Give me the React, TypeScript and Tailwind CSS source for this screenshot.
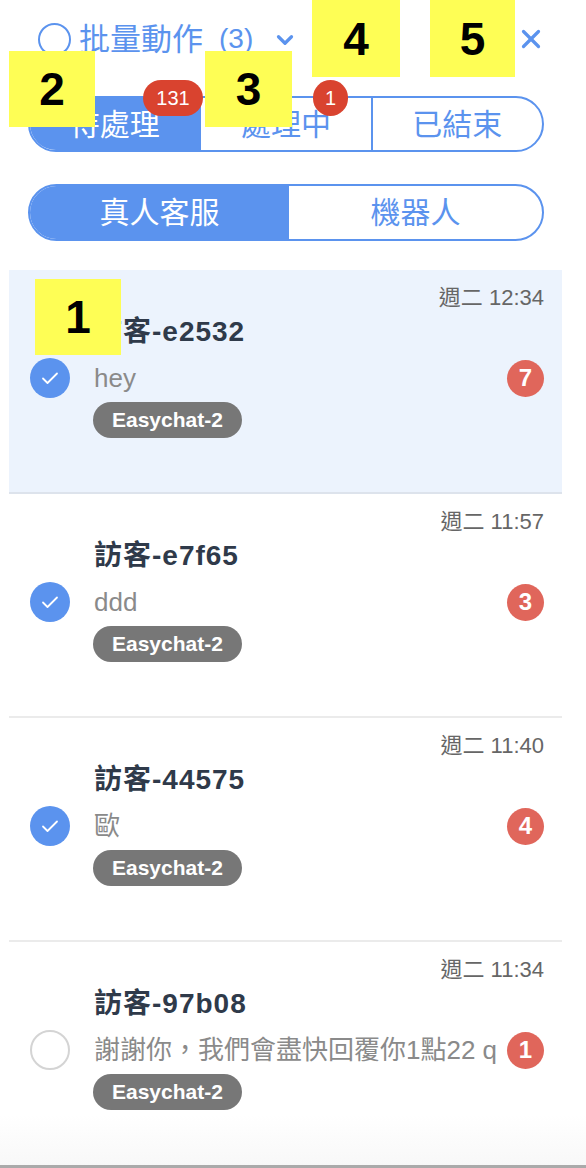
import { ChevronDown, X } from "lucide-react";

const FONT = { fontFamily: '"Liberation Sans", "Noto Sans CJK TC", sans-serif' };

type Chat = { name: string; time: string; preview: string; count: number; checked: boolean; active?: boolean };

const chats: Chat[] = [
  { name: "訪客-e2532", time: "週二 12:34", preview: "hey", count: 7, checked: true, active: true },
  { name: "訪客-e7f65", time: "週二 11:57", preview: "ddd", count: 3, checked: true },
  { name: "訪客-44575", time: "週二 11:40", preview: "歐", count: 4, checked: true },
  { name: "訪客-97b08", time: "週二 11:34", preview: "謝謝你，我們會盡快回覆你1點22 q", count: 1, checked: false },
];

function Marker({ n, className }: { n: string; className: string }) {
  return (
    <div
      className={`absolute bg-[#fefe55] flex items-center justify-center text-black font-bold text-[46px] leading-none ${className}`}
    >
      {n}
    </div>
  );
}

function CheckCircle({ checked }: { checked: boolean }) {
  if (!checked) {
    return <span className="w-[40px] h-[40px] rounded-full border-2 border-[#d4d4d4] bg-white shrink-0" />;
  }
  return (
    <span className="w-[40px] h-[40px] rounded-full bg-[#5b93ee] shrink-0 flex items-center justify-center">
      <svg width="22" height="22" viewBox="0 0 22 22" fill="none">
        <path d="M4 11.5l4.5 4.5L18 6.5" stroke="white" strokeWidth="1.8" strokeLinecap="round" strokeLinejoin="round" />
      </svg>
    </span>
  );
}

function ChatRow({ chat }: { chat: Chat }) {
  return (
    <div
      className={`h-[224px] pt-[16px] border-b-2 ${chat.active ? "bg-[#ecf3fd] border-[#dde3ec]" : "bg-white border-[#ebebeb]"}`}
    >
      <div className="text-right pr-[18px] text-[22px] leading-[24px] text-[#666]">{chat.time}</div>
      <div className="pl-[85px] mt-[5px] text-[28px] leading-[34px] font-bold tracking-[1px] text-[#2f3a4a]">
        {chat.name}
      </div>
      <div className="flex items-center mt-[9px] pl-[21px] pr-[18px]">
        <CheckCircle checked={chat.checked} />
        <span className="ml-[24px] flex-1 overflow-hidden whitespace-nowrap text-[26px] leading-[30px] text-[#8a8a8a]">
          {chat.preview}
        </span>
        <span className="ml-[10px] w-[37px] h-[37px] rounded-full bg-[#e0665b] text-white text-[24px] font-bold flex items-center justify-center shrink-0">
          {chat.count}
        </span>
      </div>
      <div className="pl-[84px] mt-[4px]">
        <span className="inline-flex items-center h-[36px] px-[19px] rounded-full bg-[#777] text-white text-[21px] font-bold">
          Easychat-2
        </span>
      </div>
    </div>
  );
}

export default function App() {
  return (
    <div className="relative w-[586px] h-[1168px] bg-white overflow-hidden" style={FONT}>
      {/* Header */}
      <div className="flex items-center h-[78px] pl-[38px] pr-[40px] text-[#5b93ee]">
        <span className="w-[33px] h-[33px] rounded-full border-[2.5px] border-[#5b93ee]" />
        <span className="ml-[8px] text-[31px] leading-none">批量動作</span>
        <span className="ml-[16px] text-[28px] leading-none">(3)</span>
        <ChevronDown className="ml-[19px] mt-[2px]" size={26} strokeWidth={3} />
        <span className="flex-1" />
        <X size={30} strokeWidth={2.6} />
      </div>

      {/* Status tabs */}
      <div className="relative ml-[28px] mr-[42px] mt-[18px]">
        <div className="flex h-[56px] rounded-full border-2 border-[#5b93ee] overflow-hidden text-[30px]">
          <div className="flex-1 bg-[#5b93ee] text-white flex items-center justify-center">待處理</div>
          <div className="flex-1 border-l-2 border-[#5b93ee] text-[#5b93ee] flex items-center justify-center">處理中</div>
          <div className="flex-1 border-l-2 border-[#5b93ee] text-[#5b93ee] flex items-center justify-center">已結束</div>
        </div>
        <span className="absolute left-[115px] top-[-16px] h-[36px] w-[60px] rounded-full bg-[#d9432f] text-white text-[20px] flex items-center justify-center">
          131
        </span>
        <span className="absolute left-[285px] top-[-16px] h-[36px] w-[35px] rounded-full bg-[#d9432f] text-white text-[20px] flex items-center justify-center">
          1
        </span>
      </div>

      {/* Agent toggle */}
      <div className="ml-[28px] mr-[42px] mt-[32px] flex h-[57px] rounded-full border-2 border-[#5b93ee] overflow-hidden text-[30px]">
        <div className="w-[259px] bg-[#5b93ee] text-white flex items-center justify-center">真人客服</div>
        <div className="flex-1 text-[#5b93ee] flex items-center justify-center">機器人</div>
      </div>

      {/* Chat list */}
      <div className="mt-[29px] ml-[9px] w-[553px]">
        {chats.map((c) => (
          <ChatRow key={c.name} chat={c} />
        ))}
      </div>

      <div className="absolute left-0 right-0 bottom-[3px] h-[50px] bg-gradient-to-b from-transparent to-[#f8f8f8]" />
      <div className="absolute left-0 right-0 bottom-0 h-[3px] bg-[#aaa]" />

      {/* Annotation markers */}
      <Marker n="4" className="left-[312px] top-0 w-[88px] h-[77px]" />
      <Marker n="5" className="left-[430px] top-0 w-[85px] h-[77px]" />
      <Marker n="2" className="left-[9px] top-[51px] w-[86px] h-[76px]" />
      <Marker n="3" className="left-[205px] top-[51px] w-[87px] h-[76px]" />
      <Marker n="1" className="left-[35px] top-[279px] w-[86px] h-[76px]" />
    </div>
  );
}
